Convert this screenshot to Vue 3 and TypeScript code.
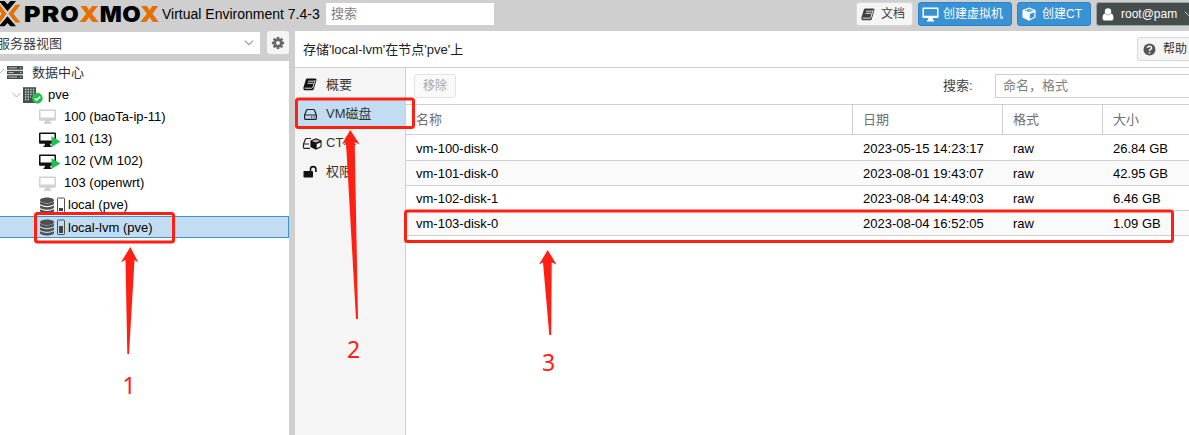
<script setup lang="ts">
interface TreeNode { label: string; kind: 'dc' | 'node' | 'off' | 'on' | 'store'; used?: number; selected?: boolean }
interface Disk { name: string; date: string; format: string; size: string }

const tree: TreeNode[] = [
  { label: '数据中心', kind: 'dc' },
  { label: 'pve', kind: 'node' },
  { label: '100 (baoTa-ip-11)', kind: 'off' },
  { label: '101 (13)', kind: 'on' },
  { label: '102 (VM 102)', kind: 'on' },
  { label: '103 (openwrt)', kind: 'off' },
  { label: 'local (pve)', kind: 'store', used: 3 },
  { label: 'local-lvm (pve)', kind: 'store', used: 7, selected: true },
]
const menu = [
  { label: '概要', icon: 'book' },
  { label: 'VM磁盘', icon: 'hdd', selected: true },
  { label: 'CT卷', icon: 'ct' },
  { label: '权限', icon: 'lock' },
]
const disks: Disk[] = [
  { name: 'vm-100-disk-0', date: '2023-05-15 14:23:17', format: 'raw', size: '26.84 GB' },
  { name: 'vm-101-disk-0', date: '2023-08-01 19:43:07', format: 'raw', size: '42.95 GB' },
  { name: 'vm-102-disk-1', date: '2023-08-04 14:49:03', format: 'raw', size: '6.46 GB' },
  { name: 'vm-103-disk-0', date: '2023-08-04 16:52:05', format: 'raw', size: '1.09 GB' },
]
const teeth = [0, 45, 90, 135, 180, 225, 270, 315]
</script>

<template>
  <div class="app">
    <svg class="defs" width="0" height="0">
      <symbol id="book" viewBox="0 0 14 13">
        <path d="M4.3.6h8.2q1.3.2.9 1.6l-2.5 8.6q-.4 1.5-1.8 1.5H1.9Q.2 12.200.5 10.400q-.3-.6.100-1.300L2.700 1.900Q3.100.6 4.300.6z" fill="currentColor" />
        <path d="M5.200 3.200h5.600M4.600 5.300h5.600M1.700 10.200h7.100q.8 0 1.100-.8L12.100 2" fill="none" stroke="var(--paper)" stroke-width=".9" />
      </symbol>
      <symbol id="cube" viewBox="0 0 14 14">
        <path d="M7 .4 13.500 2.900v7.600L7 13.700.5 10.500V2.900z" fill="currentColor" />
        <path d="M7 1.700 11.600 3.500 7 5.300 2.400 3.500zM7.800 7v4.900L12.300 9.700V5.200z" fill="var(--paper)" />
        <path d="M7 2.300 10.500 3.600 7 5 3.500 3.600z" fill="currentColor" opacity=".35" />
      </symbol>
    </svg>

    <header class="top">
      <svg class="logo" width="160" height="31" viewBox="0 0 160 31">
        <path d="M-1 1H4.500L7.500 4.300 10.500 1H16L7.500 11.200zM-1 26.300 7.500 16.200 16 26.300H10.500L7.500 23 4.500 26.300z" fill="#000" />
        <path d="M20.500 4.800H15.600L8.500 13.700 15.600 22.600H20.500L13.400 13.700zM-4 4.800H0L6.500 13.700 0 22.600H-4L1.500 13.700z" fill="#e57000" />
        <g class="wordmark" fill="#000">
          <text y="21.500"><tspan x="23.900" textLength="16.500" lengthAdjust="spacingAndGlyphs">P</tspan><tspan x="41.700" textLength="17.500" lengthAdjust="spacingAndGlyphs">R</tspan><tspan x="60.300" textLength="18.500" lengthAdjust="spacingAndGlyphs">O</tspan><tspan class="ox" x="79.300" textLength="20" lengthAdjust="spacingAndGlyphs">X</tspan><tspan x="99.700" textLength="22" lengthAdjust="spacingAndGlyphs">M</tspan><tspan x="122.300" textLength="18.500" lengthAdjust="spacingAndGlyphs">O</tspan><tspan class="ox" x="140" textLength="19.500" lengthAdjust="spacingAndGlyphs">X</tspan></text>
        </g>
      </svg>
      <span class="version">Virtual Environment 7.4-3</span>
      <div class="search">搜索</div>
      <div class="actions">
        <div class="btn docs"><svg width="14" height="13"><use href="#book" /></svg>文档</div>
        <div class="btn blue vm">
          <svg width="17" height="15" viewBox="0 0 17 15"><path d="M1.300.5h14.400q.8 0 .8.8v9q0 .8-.8.8H10.500l.7 2H12v1.400H5V13.100h.800l.7-2H1.300q-.8 0-.8-.8v-9q0-.8.8-.8zM2 2v6.800h13V2z" fill="#fff" fill-rule="evenodd" /></svg>创建虚拟机
        </div>
        <div class="btn blue ct"><svg width="14" height="14"><use href="#cube" /></svg>创建CT</div>
        <div class="btn user">
          <svg width="12" height="13" viewBox="0 0 12 13"><circle cx="6" cy="3.500" r="3.200" fill="#fff" /><path d="M2.800 5.500Q6 8.800 9.200 5.500 11.500 6.200 11.500 10.500q0 2-1.800 2H2.300q-1.800 0-1.800-2Q.5 6.200 2.800 5.500z" fill="#fff" /></svg>
          root@pam
          <svg class="caret" width="10" height="6" viewBox="0 0 10 6"><path d="m.8.7 4.200 4L9.200.7" fill="none" stroke="#ccc" /></svg>
        </div>
      </div>
    </header>

    <div class="body">
      <aside class="left">
        <div class="viewbar">
          <div class="combo"><span>服务器视图</span><svg width="10" height="6" viewBox="0 0 10 6"><path d="m.8.7 4.200 4L9.200.7" fill="none" stroke="#999" stroke-width="1.100" /></svg></div>
          <div class="gear">
            <svg width="14" height="14" viewBox="-7 -7 14 14"><rect v-for="a in teeth" :key="a" x="-1.300" y="-6.100" width="2.600" height="3" :transform="`rotate(${a})`" fill="#666" /><circle r="3.300" fill="none" stroke="#666" stroke-width="2.600" /></svg>
          </div>
        </div>
        <div class="tree">
          <div v-for="n in tree" :key="n.label" class="node" :class="[n.kind, { selected: n.selected }]">
            <svg v-if="n.kind === 'dc'" width="32" height="22" viewBox="0 0 32 22">
              <path d="M0 12.500 4 8" fill="none" stroke="#aaa" />
              <g fill="#464d4d"><rect x="7" y="5" width="16" height="3.700" rx=".5" /><rect x="7" y="9.700" width="16" height="3.600" rx=".5" /><rect x="7" y="14.300" width="16" height="3.700" rx=".5" /></g>
              <path d="M8.500 6.800h8.500M8.500 11.500h5M8.500 16.100h8.500M20 6.800h1.500M20 11.500h1.500M20 16.100h1.500" stroke="#ddd" stroke-width=".8" />
            </svg>
            <svg v-else-if="n.kind === 'node'" width="48" height="22" viewBox="0 0 48 22">
              <path d="m12.500 10 4 4 4-4" fill="none" stroke="#aaa" />
              <path d="M23 4.200h13V20H23z" fill="#464d4d" />
              <g stroke="#d3d3d3" stroke-width="1.300" stroke-dasharray="1.400 1.200"><path d="M25 6.500h9.500M25 9h9.500M25 11.500h9.500M25 14h6M25 16.500h4" /></g>
              <circle cx="37.300" cy="15.200" r="5.400" fill="#21bf4b" /><path d="m34.600 15.200 2 2 3.600-3.700" fill="none" stroke="#fff" stroke-width="1.600" />
            </svg>
            <svg v-else-if="n.kind !== 'store'" width="64" height="22" viewBox="0 0 64 22">
              <path d="M40 4.500h15q1 0 1 1v9.200q0 1-1 1H50l.6 2h1V19H43.500v-1.300h1l.6-2H40q-1 0-1-1V5.500q0-1 1-1zM40.500 6v6.500h14V6z" :fill="n.kind === 'on' ? '#111' : '#d2d2d2'" fill-rule="evenodd" />
              <path v-if="n.kind === 'on'" d="M51.500 8.200 60.500 13.500l-9 5.500z" fill="#21bf4b" />
            </svg>
            <svg v-else width="68" height="22" viewBox="0 0 68 22">
              <g fill="#505050"><path d="M40 6.200C40 2.500 54 2.500 54 6.200S40 9.900 40 6.200z" /><path d="M40 7.700q7 3.600 14 0v1.800c0 3.300-14 3.300-14 0zM40 11.500q7 3.600 14 0v1.800c0 3.300-14 3.300-14 0zM40 15.200q7 3.600 14 0V17c0 3.300-14 3.300-14 0z" /></g>
              <rect x="57.500" y="4" width="7" height="14.500" rx=".7" fill="none" stroke="#505050" />
              <rect x="59" :y="17 - (n.used ?? 0)" width="4" :height="n.used" fill="#444" />
            </svg>
            <span>{{ n.label }}</span>
          </div>
        </div>
      </aside>

      <main class="right">
        <div class="title">
          <span>存储'local-lvm'在节点'pve'上</span>
          <div class="btn help"><svg width="13" height="13" viewBox="0 0 13 13"><circle cx="6.500" cy="6.500" r="6" fill="#555" /><path d="M4.500 5Q4.600 3.200 6.500 3.200T8.600 5Q8.600 6 7.400 6.500 6.500 7 6.500 7.900M6.500 8.900v1.500" fill="none" stroke="#f5f5f5" stroke-width="1.500" /></svg>帮助</div>
        </div>
        <div class="content">
          <nav class="menu">
            <div v-for="m in menu" :key="m.label" class="item" :class="{ selected: m.selected }">
              <svg v-if="m.icon === 'book'" width="23" height="14" viewBox="0 0 23 14"><use href="#book" x="8" y="0" width="14" height="13" /></svg>
              <svg v-else-if="m.icon === 'hdd'" width="23" height="14" viewBox="0 0 23 14"><path d="M9.600 8 11.500 3.200q.3-.7 1-.7h6q.7 0 1 .7L21.400 8v3.500q0 .8-.8.8H10.400q-.8 0-.8-.8zM9.600 8h11.800" fill="none" stroke="#222" stroke-width="1.200" /><path d="M16 10.200h1.200M18.500 10.200h1.200" stroke="#222" stroke-width="1.200" /></svg>
              <svg v-else-if="m.icon === 'ct'" class="wide" width="28" height="14" viewBox="0 0 28 14"><path d="M16 2.500h-4.600q-.7 0-1 .7L8.500 8v3.500q0 .8.800.8H15M8.500 8H14" fill="none" stroke="#222" stroke-width="1.200" /><use href="#cube" x="15" y="2" width="12" height="12" /></svg>
              <svg v-else width="23" height="14" viewBox="0 0 23 14"><rect x="8.500" y="6" width="9.500" height="6.500" rx=".8" fill="#111" /><path d="M15.500 6.300V4.300a2.700 2.700 0 0 1 5.400 0V7" fill="none" stroke="#111" stroke-width="1.600" /></svg>
              <span>{{ m.label }}</span>
            </div>
          </nav>
          <section class="grid">
            <div class="toolbar">
              <div class="remove">移除</div>
              <span class="label">搜索:</span>
              <div class="filter">命名，格式</div>
            </div>
            <div class="row head"><div>名称</div><div>日期</div><div>格式</div><div>大小</div></div>
            <div v-for="d in disks" :key="d.name" class="row">
              <div>{{ d.name }}</div><div>{{ d.date }}</div><div>{{ d.format }}</div><div>{{ d.size }}</div>
            </div>
          </section>
        </div>
      </main>
    </div>

    <svg class="marks" width="1189" height="435" viewBox="0 0 1189 435">
      <g fill="none" stroke="#ff2013" stroke-width="3">
        <rect x="35.500" y="213.500" width="138" height="28.500" rx="2" />
        <rect x="296.500" y="99" width="117" height="28.500" rx="2" />
        <rect x="405.500" y="211" width="767" height="30.500" rx="2" />
      </g>
      <g fill="#ff2013">
        <path d="M130.300 247 138.300 262.300 134.500 260 129 354H127.300L125.500 260 121 262.300z" />
        <path d="M350.300 130 359.500 144.300 354.700 142.300 358 319H356L346 142.300 342 144.300z" />
        <path d="M547.700 250 556.500 264.500 551.700 262.500 551.200 335H549.300L543 262.500 539 264.500z" />
      </g>
      <g class="num"><text x="122.500" y="393.500">1</text><text x="347" y="357.500">2</text><text x="542" y="370.500">3</text></g>
    </svg>
  </div>
</template>

<style>
body { margin: 0; overflow: hidden; }
</style>
<style scoped>
.app { position: relative; width: 1189px; height: 435px; overflow: hidden; background: #cfcfcf; color: #000; font: 13px/1 "Liberation Sans", "Noto Sans CJK SC", sans-serif; display: flex; flex-direction: column; white-space: nowrap; }
.app * { box-sizing: border-box; }
.app svg { flex: none; display: block; }
.app .defs { display: none; }
.top { height: 31px; flex: none; display: flex; }
.wordmark { font: 900 21.500px Inter, sans-serif; }
.ox { fill: #e57000; }
.version { font-size: 14px; margin: 7px 0 0 2px; width: 164px; flex: none; line-height: 14px; }
.search { width: 168px; flex: none; height: 22px; margin-top: 3px; background: #fff; color: #808080; padding-left: 5px; line-height: 22px; }
.actions { display: flex; margin: 2px 0 0 362px; }
.btn { display: flex; align-items: center; flex: none; height: 24px; border: 1px solid #d8d8d8; border-radius: 3px; background: #f5f5f5; color: #333; font-size: 12px; --paper: #f5f5f5; }
.docs { width: 57px; padding-left: 4px; gap: 6px; margin-right: 5px; color: #404040; }
.blue { background: #3892d4; border-color: #2584cc; color: #fff; --paper: #3892d4; }
.vm { width: 94px; padding-left: 3px; gap: 4px; margin-right: 5px; }
.ct { width: 74px; padding-left: 4px; gap: 6px; margin-right: 5px; }
.user { width: 110px; background: #464d4d; border-color: #98a5a5; color: #fff; padding-left: 5px; gap: 7px; }
.body { flex: 1; display: flex; min-height: 0; }
.left { width: 289px; flex: none; margin-right: 6px; display: flex; flex-direction: column; }
.viewbar { height: 30px; flex: none; display: flex; gap: 7px; }
.combo { width: 260px; height: 22px; margin-top: 1px; background: #fff; display: flex; align-items: center; justify-content: space-between; padding-right: 6px; color: #404040; }
.combo span { margin-left: -3px; }
.gear { width: 22px; height: 23px; border-radius: 3px; background: #f5f5f5; display: flex; align-items: center; justify-content: center; }
.tree { flex: 1; background: #fff; }
.node { height: 22.150px; display: flex; align-items: center; border: 1px solid transparent; border-left: 0; }
.node.selected { background: #c2ddf2; border-color: #3892d4; }
.dc { color: #333; }
.right { flex: 1; background: #fff; display: flex; flex-direction: column; min-width: 0; }
.title { height: 37px; flex: none; border-bottom: 1px solid #cfcfcf; padding-left: 8px; display: flex; align-items: center; justify-content: space-between; color: #222; }
.help { width: 70px; margin-right: -18px; padding-left: 5px; gap: 7px; }
.content { flex: 1; display: flex; min-height: 0; }
.menu { width: 111px; flex: none; background: #f5f5f5; border-right: 1px solid #cfcfcf; padding-top: 2px; --paper: #f5f5f5; }
.item { height: 29px; display: flex; align-items: center; gap: 8px; color: #333; }
.item svg { color: #111; }
.item .wide { margin-right: -5px; }
.item.selected { background: #c2ddf2; }
.grid { flex: 1; min-width: 0; overflow: hidden; }
.toolbar { height: 36px; display: flex; padding: 6px 0 0 8px; }
.remove { width: 42px; flex: none; height: 24px; border: 1px solid #e4e4e4; border-radius: 3px; background: #fafafa; color: #a5a5a5; font-size: 12px; line-height: 22px; text-align: center; }
.label { margin-left: 487px; width: 52px; flex: none; line-height: 23px; color: #404040; }
.filter { width: 220px; flex: none; height: 24px; border: 1px solid #cfcfcf; padding-left: 7px; line-height: 22px; color: #808080; }
.row { display: grid; grid-template-columns: 447px 150px 100px 120px; height: 25px; border-bottom: 1px solid #cfcfcf; line-height: 26px; }
.row:nth-child(3) { height: 26px; line-height: 28px; }
.row:nth-child(4), .row:nth-child(6) { background: #fafafa; }
.row > div { padding-left: 10px; }
.row.head { height: 31px; border-top: 1px solid #cfcfcf; color: #707070; line-height: 29px; }
.row.head > div { border-left: 1px solid #cfcfcf; margin-left: -1px; }
.row.head > div:first-child { border: 0; margin: 0; }
.marks { position: absolute; inset: 0; pointer-events: none; }
.num { font: 23px "Noto Sans", sans-serif; fill: #ff2013; }
</style>
